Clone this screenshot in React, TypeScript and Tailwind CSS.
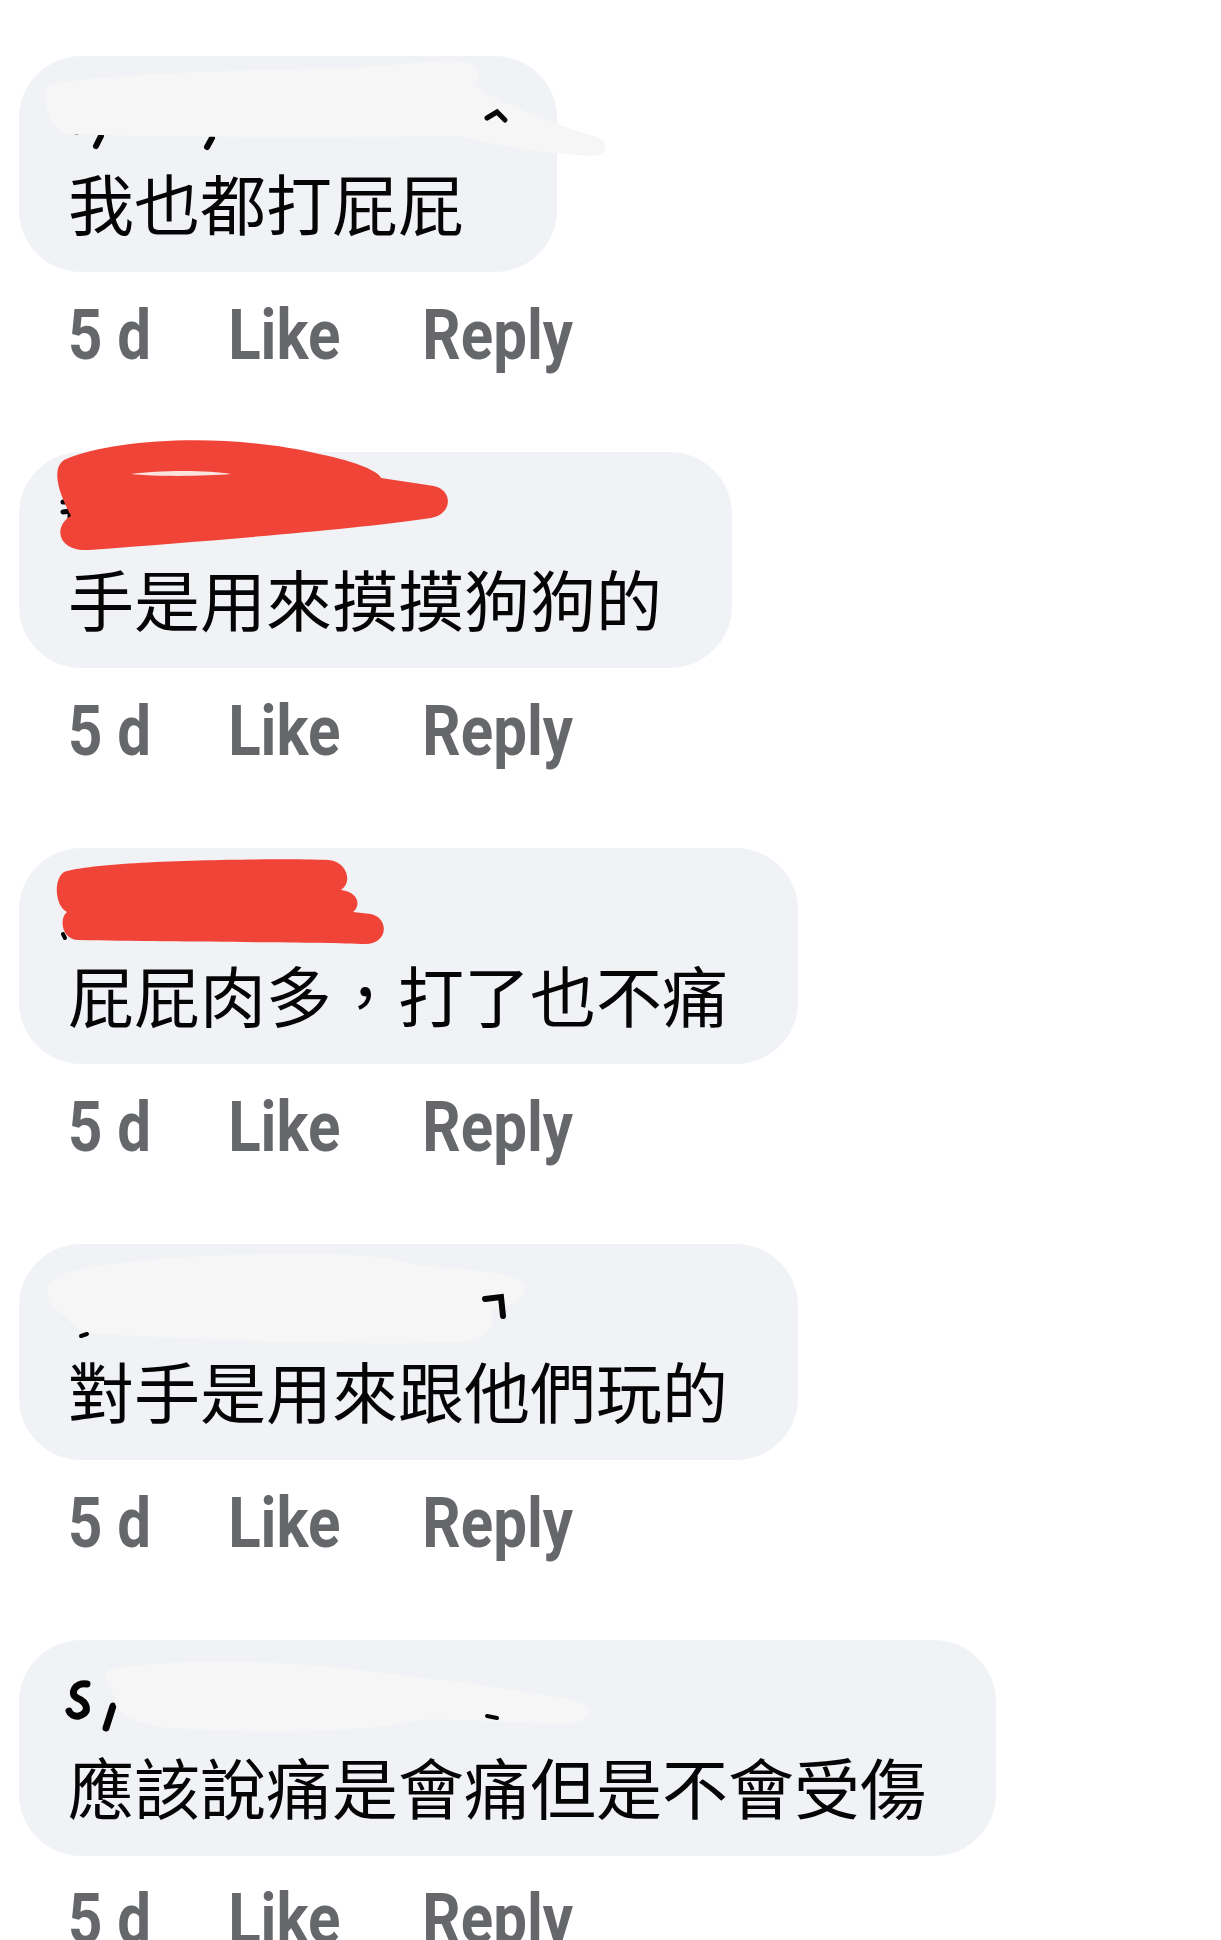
import React from "react";

type Comment = {
  text: string;
  nameCls: string;
  smear: React.ReactNode;
};

const W = "#f6f6f6";
const R = "#f14438";
const K = "#050505";

const frag = (d: string, w = 5) => (
  <path d={d} stroke={K} strokeWidth={w} strokeLinecap="round" fill="none" />
);

const comments: Comment[] = [
  {
    text: "我也都打屁屁",
    nameCls: "w-[419px]",
    smear: (
      <>
        {frag("M46 73 L58 76")}
        {frag("M82 80 L77 90", 6)}
        {frag("M193 82 L188 91", 6)}
        {frag("M330 76 L344 73")}
        {frag("M356 74 L362 78", 4)}
        <path
          d="M28 30 C60 20 200 14 330 12 C380 10 420 2 445 6 C460 8 462 22 455 30 C490 50 540 70 575 80 C592 86 590 100 572 100 C530 98 480 90 440 80 C330 82 160 82 50 78 C30 76 22 40 28 30 Z"
          fill={W}
        />
        {frag("M468 62 L478 56 L486 64", 5)}
      </>
    ),
  },
  {
    text: "手是用來摸摸狗狗的",
    nameCls: "",
    smear: (
      <>
        {frag("M44 50 L58 50 M51 44 L51 66 M44 60 L58 58", 5)}
        <path
          d="M45 8 C100 -16 220 -18 300 2 C340 10 360 20 362 26 L415 34 C434 38 434 62 412 66 C330 78 200 88 70 98 C38 100 34 74 52 64 C48 56 28 20 45 8 Z"
          fill={R}
        />
        <path d="M112 22 C140 18 190 18 212 22 C190 24 140 25 112 22 Z" fill="#fbe3e0" />
      </>
    ),
  },
  {
    text: "屁屁肉多，打了也不痛",
    nameCls: "",
    smear: (
      <>
        {frag("M44 86 L46 90", 4)}
        {frag("M292 88 L294 92", 4)}
        <path
          d="M45 24 C80 12 250 10 310 12 C328 14 334 34 322 42 C340 44 342 58 334 64 L352 66 C370 70 370 96 346 96 C300 94 150 94 60 92 C42 92 40 70 48 64 C36 58 34 32 45 24 Z"
          fill={R}
        />
      </>
    ),
  },
  {
    text: "對手是用來跟他們玩的",
    nameCls: "",
    smear: (
      <>
        <path d="M50 62 L62 62 L56 74 Z" fill={K} />
        {frag("M62 92 L68 90", 4)}
        {frag("M226 92 L232 88", 6)}
        <path
          d="M30 40 C40 20 150 12 250 10 C330 8 380 14 400 22 C450 24 500 30 505 40 C510 56 490 64 470 64 C480 80 470 96 440 98 C330 102 200 96 80 90 C60 88 50 80 48 72 C30 66 25 50 30 40 Z"
          fill={W}
        />
        {frag("M466 55 L482 53 L484 72", 6)}
      </>
    ),
  },
  {
    text: "應該說痛是會痛但是不會受傷",
    nameCls: "",
    smear: (
      <>
        {frag("M68 44 C56 42 50 54 58 58 C68 62 72 72 60 76 C55 77 51 74 50 71", 7)}
        {frag("M94 66 L87 88", 7)}
        {frag("M272 72 L276 72", 3)}
        {frag("M402 75 L410 75", 3)}
        <path
          d="M88 30 C150 18 260 20 340 30 C400 38 430 40 455 44 C500 52 560 58 568 66 C575 76 560 86 540 84 C480 82 420 78 400 80 C350 92 250 94 150 88 C110 84 92 70 96 56 C90 50 84 36 88 30 Z"
          fill={W}
        />
        {frag("M468 76 L478 78", 4)}
      </>
    ),
  },
];

function Item({ c }: { c: Comment }) {
  return (
    <div className="mb-[86px] flex flex-col items-start">
      <div className="relative ml-[19px] rounded-[62px] bg-[#f0f2f5] pb-[31px] pl-[49px] pr-[70px]">
        <div className={`h-[105px] ${c.nameCls}`} />
        <div className="whitespace-nowrap font-['Noto_Sans_CJK_TC','Noto_Sans_CJK_SC',sans-serif] text-[66px] leading-[80px] text-[#050505]">
          {c.text}
        </div>
        <svg
          className="pointer-events-none absolute left-0 top-0 overflow-visible"
          width="600"
          height="120"
          viewBox="0 0 600 120"
        >
          {c.smear}
        </svg>
      </div>
      <div className="ml-[68px] mt-[34px] flex h-[60px] items-center whitespace-nowrap font-['Roboto',sans-serif] text-[60px] font-bold leading-[60px] text-[#65676b]">
        <span className="inline-block [transform:scaleY(1.17)]">5 d</span>
        <span className="ml-[77px] inline-block [transform:scaleY(1.17)]">Like</span>
        <span className="ml-[82px] inline-block [transform:scaleY(1.17)]">Reply</span>
      </div>
    </div>
  );
}

export default function App() {
  return (
    <div className="h-[1940px] w-[1221px] overflow-hidden bg-white pt-[56px]">
      {comments.map((c, i) => (
        <Item key={i} c={c} />
      ))}
    </div>
  );
}
